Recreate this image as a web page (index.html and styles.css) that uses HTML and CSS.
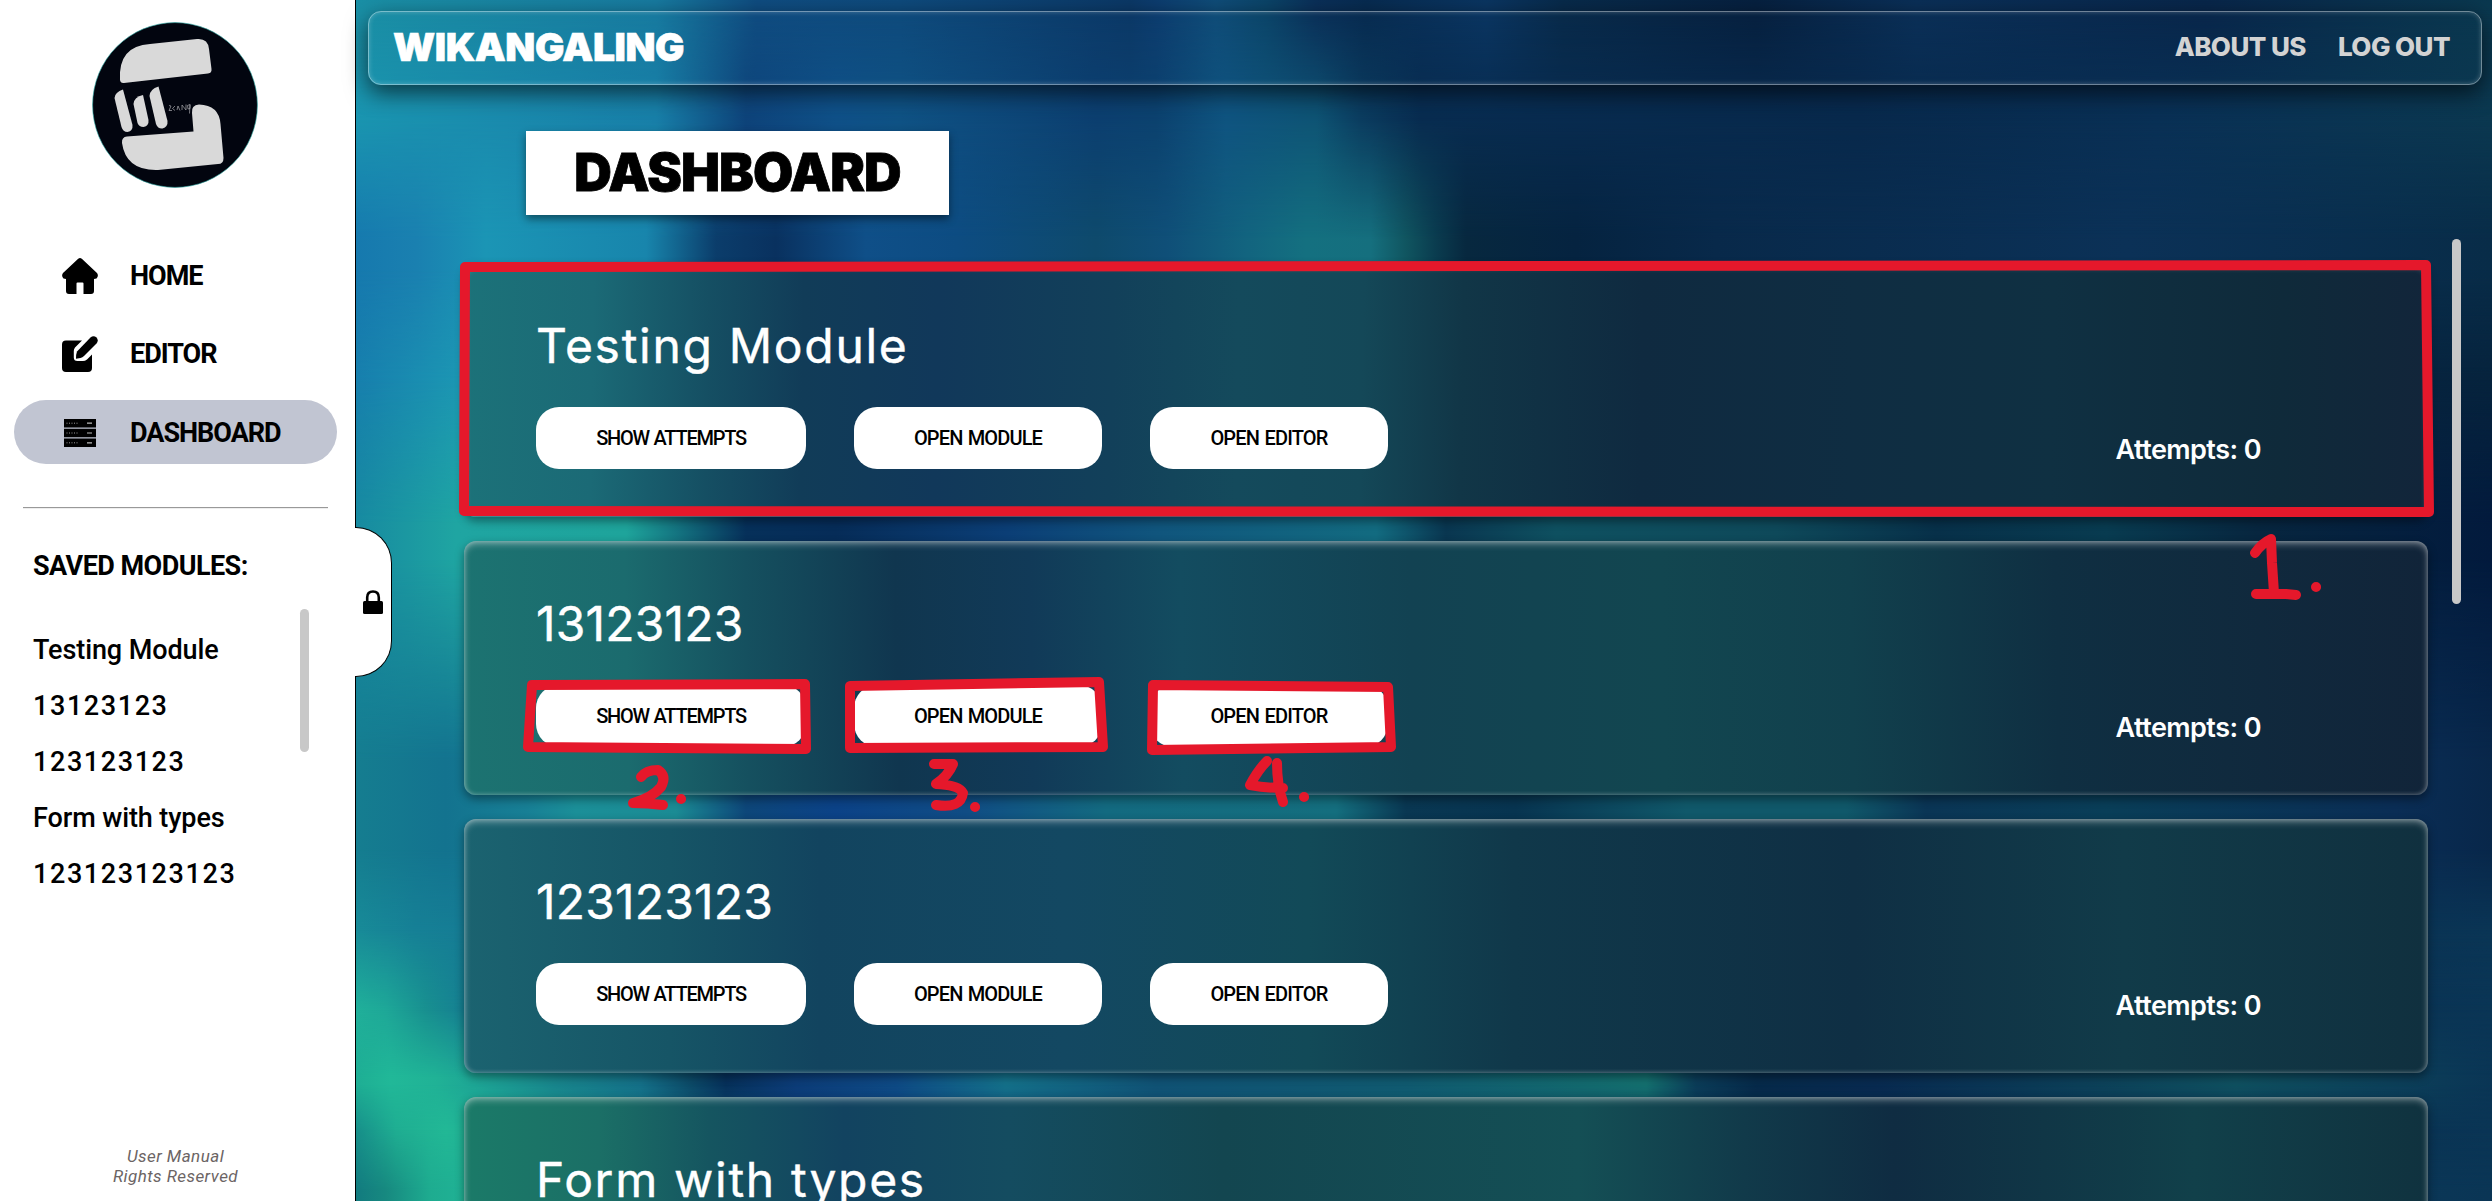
FILE: index.html
```html
<!DOCTYPE html>
<html lang="en">
<head>
<meta charset="utf-8">
<title>Wikangaling - Dashboard</title>
<link rel="stylesheet" href="styles.css">
</head>
<body>
<aside class="sidebar">
  <svg class="logo" viewBox="0 0 166 166">
    <circle cx="83" cy="83" r="82.4" fill="#02050f" stroke="#2aa9a4" stroke-width=".6"/>
    <g fill="#d9d9d9">
      <path d="M28 58Q26 24 58 22L105 17Q116 16 117 27L119.500 47Q120 51 116 51.500L32 61Q28.500 61.500 28 58Z"/>
      <path d="M22.500 76Q23 70 31 67.500L40.500 103Q41 109 35.500 110Q31 110 29.500 105Z"/>
      <path d="M41.500 82Q42 75 51 73L56.500 98Q57 104 51.500 105Q47 105 45.500 101Z"/>
      <path d="M57.500 74Q58 67 66.500 64.500L75.500 99Q76 105 70.500 106.500Q66 107 64 102Z"/>
      <path d="M30 121Q29.500 115 35 114.500L101.500 109.500L100 91Q99 83 107 82.500Q127 83 128.500 102L131.500 136Q131.500 142 126 142L66 148Q34 149 30 121Z"/>
    </g>
    <path d="M77 83.500l2 .5-2 4.500h3M83 84l-2.500 2.500 2.500 2M85 88l1-4 2 4.500M90 88v-5l4 5v-5.500M98 82.500l-2.500 1 .5 3.500 2-.5v-4l-.5 9" fill="none" stroke="#a9a9ad" stroke-width=".7"/>
  </svg>
  <nav class="nav">
    <a class="nav-item">
      <svg class="nav-icon" viewBox="0 0 36 36"><path d="M16.200.8Q18-.8 19.800.8L35 15Q37 18 34.500 20.500L32 21V33Q32 36 29 36H21.500V25.500Q21.500 24.500 20.500 24.500H15.500Q14.500 24.500 14.500 25.500V36H7Q4 36 4 33V21L1.500 20.500Q-1 18 1 15Z"/></svg>
      <span>HOME</span>
    </a>
    <a class="nav-item">
      <svg class="nav-icon" viewBox="0 0 36 36"><path d="M4 4.500H20L13 11.500Q11.800 13 11.800 15V21.500Q11.800 25 15.500 25H21Q23 25 25 23.500L30 18.500V32Q30 36 26 36H4Q0 36 0 32V8.500Q0 4.500 4 4.500Z"/><path d="M28.500 1.500Q31.500-1 34.500 1.500Q37 4.500 34.500 7.500L22 20Q20.500 21.500 18.500 22L14 22.800Q14 18 15 15.500Z"/></svg>
      <span>EDITOR</span>
    </a>
    <a class="nav-item nav-item-active">
      <svg class="nav-icon" viewBox="0 0 36 36"><path d="M2 4h32v8.500H2ZM2 13.800h32v8.500H2ZM2 23.600h32v8.500H2Z"/><path d="M4.500 8.200h12M4.500 18h12M4.500 27.800h12" stroke="#999" stroke-dasharray="1 1.500"/><path d="M25 8.200h5M25 18h5M25 27.800h5" stroke="#bbb" stroke-width="1.200"/></svg>
      <span>DASHBOARD</span>
    </a>
  </nav>
  <hr class="divider">
  <h2 class="saved-title">SAVED MODULES:</h2>
  <div class="saved">
    <ul class="saved-list">
      <li>Testing Module</li>
      <li class="digits">13123123</li>
      <li class="digits">123123123</li>
      <li>Form with types</li>
      <li class="digits">123123123123</li>
    </ul>
    <i class="saved-thumb"></i>
  </div>
  <footer class="footer"><span>User Manual</span><span>Rights Reserved</span></footer>
  <button class="lock" aria-label="Lock sidebar">
    <svg width="20" height="24" viewBox="0 0 20 24"><path d="M4.200 12V7.500Q4.200 1.500 10 1.500Q15.800 1.500 15.800 7.500V12" fill="none" stroke="#000" stroke-width="2.600"/><rect y="11" width="20" height="13" rx="1.500"/></svg>
  </button>
</aside>

<main class="main">
  <div class="aurora"><i></i><i></i><i></i><i></i><i></i><i></i><i></i><i></i><i></i><i></i><i></i></div>
  <header class="topbar">
    <span class="brand">WIKANGALING</span>
    <a class="about">ABOUT US</a>
    <a class="logout">LOG OUT</a>
  </header>
  <div class="heading-row"><h1 class="heading"><span>DASHBOARD</span></h1></div>
  <div class="content">
    <section class="cards">
      <article class="card card-a">
        <h3 class="title">Testing Module</h3>
        <div class="actions"><button class="show">SHOW ATTEMPTS</button><button class="open">OPEN MODULE</button><button class="edit">OPEN EDITOR</button></div>
        <p class="attempts">Attempts: 0</p>
      </article>
      <article class="card card-b">
        <h3 class="title title-num">13123123</h3>
        <div class="actions"><button class="show">SHOW ATTEMPTS</button><button class="open">OPEN MODULE</button><button class="edit">OPEN EDITOR</button></div>
        <p class="attempts">Attempts: 0</p>
      </article>
      <article class="card card-c">
        <h3 class="title title-num">123123123</h3>
        <div class="actions"><button class="show">SHOW ATTEMPTS</button><button class="open">OPEN MODULE</button><button class="edit">OPEN EDITOR</button></div>
        <p class="attempts">Attempts: 0</p>
      </article>
      <article class="card card-d">
        <h3 class="title">Form with types</h3>
      </article>
    </section>
    <i class="page-thumb"></i>
  </div>
</main>

<svg class="marks" viewBox="0 0 2492 1201">
  <path d="M465 267L2426 265L2429 512L464 511Z"/>
  <path d="M532 685L805 684L806 749L528 747Z"/>
  <path d="M850 686L1099 682L1103 747L850 748Z"/>
  <path d="M1153 685L1388 687L1391 747L1152 750Z"/>
  <path d="M2255 553Q2262 543 2271 539L2272 563L2274 593M2256 594H2286L2296 595"/>
  <path d="M641 777Q646 770 658 770Q667 776 661 787Q652 798 633 803Q648 803 663 805"/>
  <path d="M934 764H953Q948 776 936 784Q959 785 963 793Q961 809 936 805"/>
  <path d="M1267 761Q1258 770 1250 785Q1265 788 1283 788M1277 763Q1277 785 1283 802"/>
  <path d="M2316 587h.1M681 799h.1M975 807h.1M1304 797h.1"/>
</svg>
</body>
</html>
```
FILE: styles.css
```css
* { box-sizing: border-box; }

html { overflow: hidden; }

body {
  margin: 0;
  display: flex;
  height: 1201px;
  overflow: hidden;
  position: relative;
  font-family: Roboto, "Liberation Sans", sans-serif;
  color: #000;
}

button { border: 0; padding: 0; font: inherit; color: inherit; }

/* Sidebar */
.sidebar {
  width: 356px;
  flex: none;
  display: flex;
  flex-direction: column;
  position: relative;
  background: #fff;
  border-right: 1px solid #000;
}
.logo { width: 166px; height: 166px; margin: 22px 0 0 92px; }
.nav { margin: 55px 18px 0 14px; display: flex; flex-direction: column; gap: 14.5px; }
.nav-item {
  height: 64px;
  padding: 1px 0 0 48px;
  display: flex;
  align-items: center;
  border-radius: 32px;
  font-weight: 700;
  font-size: 27px;
  letter-spacing: -1px;
}
.nav-item-active { background: #c1c5d2; }
.nav-icon { width: 36px; height: 36px; margin-right: 32px; }
.divider { width: 305px; margin: 42.500px 0 0 23px; border: 0; border-top: 1px solid #999; border-bottom: 1px solid #eee; }
.saved-title { margin: 40px 0 0 33px; font-size: 27px; line-height: 34px; letter-spacing: -.55px; white-space: nowrap; }
.saved { display: flex; margin: 26px 46px 0 33px; }
.saved-list { flex: 1; list-style: none; margin: 13px 0 0; padding: 0; font-size: 27px; line-height: 56px; font-weight: 500; letter-spacing: -.1px; }
.saved-list .digits { letter-spacing: 1.600px; }
.saved-thumb { width: 9px; height: 143px; border-radius: 5px; background: #c8c8c8; }
.footer {
  margin-top: auto;
  padding: 0 4px 15px 0;
  display: flex;
  flex-direction: column;
  align-items: center;
  font-size: 17px;
  line-height: 20px;
  letter-spacing: .45px;
  font-style: italic;
  color: #6b6464;
}
.lock {
  position: absolute;
  left: 355px;
  top: 527px;
  width: 37px;
  height: 150px;
  z-index: 3;
  display: flex;
  align-items: center;
  padding-left: 8px;
  background: #fff;
  border: 1px solid #000;
  border-left: 0;
  border-radius: 0 36px 36px 0;
}

/* Page area */
.main { flex: 1; min-width: 0; position: relative; z-index: 1; display: flex; flex-direction: column; }

/* Each band fades in over the previous one until it reaches its own row */
.aurora { position: absolute; inset: 0; z-index: -1; overflow: hidden; }
.aurora i { position: absolute; inset: 0; }
.aurora i:nth-child(1) {
  background: linear-gradient(90deg, #1a8fa5, #177a9f 300px, #0f4c80 400px, #0e4a7c 544px, #0b3866 774px, #0c3c6e 800px, #0f4c78 860px, #0b4468 910px, #0a2f58 960px, #072b50 1010px, #0a3561 1130px, #082a4a 1207px, #06203f 1400px, #0a2f57 1560px, #08264a 1850px, #0a384f);
}
.aurora i:nth-child(2) {
  background: linear-gradient(90deg, #1a95b0, #1a8aad 150px, #187fa8 300px, #0e437a 390px, #0f5088 480px, #0f5284 544px, #0c3f70 740px, #0c426f 800px, #0f5480 870px, #0e5474 960px, #0b3d60 1005px, #082c50 1065px, #08294c 1500px, #093055 1800px, #0b3850);
  mask-image: linear-gradient(transparent 10px, #000 120px);
}
.aurora i:nth-child(3) {
  background: linear-gradient(90deg, #1679ae, #1a80b0 60px, #1b95b5 130px, #1885ac 290px, #0b3d6b 360px, #09315f 420px, #0f4f88 510px, #0d4c82 600px, #0e4a6c 740px, #0f4f78 810px, #12647f 890px, #147080 950px, #156f7e 1015px, #105560 1050px, #0a3c4f 1080px, #07283f 1110px, #052340 1220px, #08294a 1360px, #0b3157 1770px, #082c48);
  mask-image: linear-gradient(transparent 120px, #000 240px);
}
.aurora i:nth-child(4) {
  background: linear-gradient(90deg, #177fad, #1c96b3 100px, #1a8aa5 290px, #082f58 400px, #0b3f74 620px, #12667a 1000px, #06233d 1180px, #08294a 1500px, #06233d);
  mask-image: linear-gradient(transparent 270px, #000 380px);
}
.aurora i:nth-child(5) {
  background: linear-gradient(90deg, #178aa0, #1fa5a2 100px, #1ea49b 270px, #147581 320px, #06305a 390px, #062c58 480px, #0b3e76 650px, #10557d 800px, #126b80 1020px, #093650 1090px, #0e5060 1200px, #0e495a 1420px, #073049 1580px, #083b50 1750px, #07263f 1900px, #021a3d);
  mask-image: linear-gradient(transparent 380px, #000 525px);
}
.aurora i:nth-child(6) {
  background: linear-gradient(90deg, #157d90, #13738f 90px, #177f95 170px, #1b8f98 220px, #1b8b94 320px, #0d4679 390px, #0b4287 480px, #104c84 610px, #136a80 750px, #146e7e 980px, #093752 1050px, #073450 1160px, #10586a 1330px, #10586a 1490px, #0a3555 1570px, #093e58 1750px, #0a2d55 2040px, #08274a);
  mask-image: linear-gradient(transparent 560px, #000 760px);
}
.aurora i:nth-child(7) {
  background: linear-gradient(90deg, #188b98, #168096 60px, #157b94 130px, #137585 260px, #0c3c78 400px, #0e4a85 540px, #105275 800px, #105a70 1050px, #0b3c58 1340px, #082a50 1520px, #0a3555);
  mask-image: linear-gradient(transparent 850px, #000 930px);
}
.aurora i:nth-child(8) {
  background: linear-gradient(90deg, #20b09a, #1ea898 30px, #189090 70px, #157f92 110px, #137585 260px, #0c3c78 400px, #0e4a85 540px, #105275 800px, #105a70 1050px, #0b3c58 1340px, #082a50 1520px, #0a3555);
  mask-image: linear-gradient(transparent 930px, #000 1010px);
}
.aurora i:nth-child(9) {
  background: linear-gradient(90deg, #1eae94, #21b898 35px, #20b296 80px, #1da595 120px, #18858c 200px, #147088 285px, #0c4a68 335px, #06305a 370px, #0c3c78 440px, #0e4a85 540px, #14718a 650px, #105275 800px, #105a70 1050px, #14706f 1290px, #0b3c58 1340px, #062a4a 1400px, #082a50 1520px, #0f5060 1880px, #0a3555);
  mask-image: linear-gradient(transparent 1010px, #000 1078px);
}
.aurora i:nth-child(10) {
  background: linear-gradient(90deg, #178f8a, #1fae92 40px, #22b896 90px, #1ea895 150px, #0c3c78 440px, #105275 800px, #105a70 1050px, #062a4a 1400px, #0a3555);
  mask-image: linear-gradient(transparent 1085px, #000 1130px);
}
.aurora i:nth-child(11) {
  background: linear-gradient(90deg, #127b7f, #178980 30px, #1eac90 75px, #20b295 110px, #137585 270px, #0c3c78 400px, #105275 800px, #0a3555);
  mask-image: linear-gradient(transparent 1130px, #000 1190px);
}

.topbar {
  height: 74px;
  margin: 11px 10px 0 12px;
  padding: 0 31px 3px 24px;
  display: flex;
  align-items: center;
  font-family: Inter, sans-serif;
  border: 1px solid rgba(255, 255, 255, .42);
  border-radius: 13px;
  box-shadow: 0 8px 22px rgba(0, 0, 0, .6), inset 0 0 5px rgba(255, 255, 255, .25);
}
.brand { margin-right: auto; font-size: 39px; font-weight: 900; letter-spacing: -.450px; color: #fff; -webkit-text-stroke: .6px #fff; }
.about, .logout { font-size: 26px; font-weight: 800; letter-spacing: -.550px; color: #d3d3d3; }
.about { margin-right: 32px; }

.heading-row { padding: 46px 0 0 170px; }
.heading {
  width: 423px;
  height: 84px;
  margin: 0;
  display: flex;
  align-items: center;
  justify-content: center;
  background: #fff;
  box-shadow: 0 4px 8px rgba(0, 0, 0, .45);
  font: 900 52px Inter, sans-serif;
  letter-spacing: -.900px;
  -webkit-text-stroke: .8px #000;
}
.heading span { padding-bottom: 2px; }

.content { flex: 1; min-height: 0; display: flex; align-items: flex-start; padding: 24px 31px 0 108px; }
.cards { flex: 1; margin-top: 24px; display: flex; flex-direction: column; gap: 24px; }
.page-thumb { width: 9px; height: 365px; margin-left: 24px; border-radius: 5px; background: #c8c8c8; }

.card {
  height: 254px;
  display: grid;
  grid-template-columns: 1fr auto;
  grid-template-rows: 80px 62px;
  row-gap: 17px;
  padding: 47px 167px 0 72px;
  border-radius: 12px;
  color: #fff;
  box-shadow: 0 4px 10px rgba(0, 0, 0, .4), inset 0 3px 7px rgba(255, 255, 255, .38), inset 0 0 4px rgba(255, 255, 255, .3);
}
.card-a { background: linear-gradient(91deg, #1c7279, #1b6a76 130px, #154f63 245px, #113c58 340px, #11385a 475px, #12405a 650px, #144a5c 775px, #144858 900px, #113647 1000px, #0f2a40 1180px, #0f2d42 1390px, #0f3042 1590px, #0f2a3a 1820px, #12253a); }
.card-b { background: linear-gradient(89deg, #1c7371, #1b6b6e 165px, #15505f 285px, #10364f 435px, #113a58 570px, #134c60 720px, #124252 950px, #124650 1200px, #11404d 1390px, #0f2f42 1595px, #112439); }
.card-c { background: linear-gradient(90deg, #1b6370, #165566 205px, #12445f 355px, #134862 600px, #124a58 845px, #10384a 1050px, #0f2f44 1390px, #113b49 1660px, #10303f); }
.card-d { background: linear-gradient(90deg, #1b7a68, #1b6f66 135px, #155560 245px, #124360 380px, #144c60 545px, #134650 760px, #144f55 1115px, #113a4a 1280px, #0f2c42 1430px, #11404a 1730px, #10323f); }

.title { grid-column: 1 / -1; margin: 0; padding-top: 6px; font: 400 48px/60px Inter, sans-serif; letter-spacing: 1.700px; white-space: nowrap; -webkit-text-stroke: .4px #fff; }
.title-num { letter-spacing: .2px; }
.actions { display: flex; gap: 48px; }
.actions button { height: 62px; border-radius: 23px; background: #fff; color: #000; font-size: 20px; font-weight: 500; word-spacing: 1px; white-space: nowrap; }
.actions .show { width: 270px; letter-spacing: -1.250px; }
.actions .open { width: 248px; letter-spacing: -.850px; }
.actions .edit { width: 238px; letter-spacing: -.800px; }
.attempts { margin: 26px 0 0; font: 600 27px/34px Inter, sans-serif; letter-spacing: -.550px; white-space: nowrap; }

/* Hand-drawn annotations over the page */
.marks { position: absolute; inset: 0; width: 2492px; height: 1201px; z-index: 5; fill: none; stroke: #e5182b; stroke-width: 10; stroke-linecap: round; stroke-linejoin: round; }
```
